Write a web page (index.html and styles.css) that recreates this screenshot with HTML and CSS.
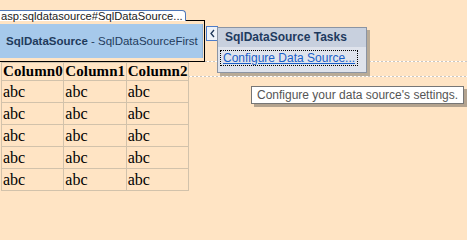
FILE: index.html
```html
<!DOCTYPE html>
<html lang="en">
<head>
    <meta charset="UTF-8">
    <title>SqlDataSource designer</title>
    <link rel="stylesheet" href="styles.css">
</head>
<body>
<div class="canvas">
    <div class="tag">asp:sqldatasource#SqlDataSource...</div>
    <div class="control">
        <div class="control-head"><b>SqlDataSource</b> - SqlDataSourceFirst</div>
    </div>
    <table class="grid">
        <tr><th>Column0</th><th>Column1</th><th>Column2</th></tr>
        <tr><td>abc</td><td>abc</td><td>abc</td></tr>
        <tr><td>abc</td><td>abc</td><td>abc</td></tr>
        <tr><td>abc</td><td>abc</td><td>abc</td></tr>
        <tr><td>abc</td><td>abc</td><td>abc</td></tr>
        <tr><td>abc</td><td>abc</td><td>abc</td></tr>
    </table>

    <!-- designer glyphs drawn over the page -->
    <div class="guide guide-top"></div>
    <div class="guide guide-bottom"></div>
    <div class="smart-btn">
        <svg width="7" height="9" viewBox="0 0 7 9"><path d="M5 1 L2 4.5 L5 8" fill="none" stroke="#1d3557" stroke-width="1.3"/></svg>
    </div>
    <div class="tasks">
        <div class="tasks-head">SqlDataSource Tasks</div>
        <div class="tasks-body">
            <a href="#" class="tasks-link">Configure Data Source...</a>
        </div>
    </div>
    <div class="tip">Configure your data source's settings.</div>
</div>
</body>
</html>
```

FILE: styles.css
```css
body {
    margin: 0;
    background: #ffe4c4;
    font-family: "Liberation Sans", Arial, sans-serif;
}
.canvas {
    position: relative;
    width: 467px;
    height: 240px;
    overflow: hidden;
}
.tag {
    display: inline-block;
    margin-top: 10px;
    height: 10px;
    line-height: 10px;
    padding: 0 2px 0 1px;
    font-size: 11.2px;
    color: #222;
    background: #fff;
    border: 1px solid #5078b8;
    border-bottom: none;
    border-left: none;
    border-radius: 0 4px 0 0;
    vertical-align: top;
}
.control {
    width: 204px;
    border: 1px solid #000;
    border-left: none;
    padding: 3px 0;
    margin-top: -1px;
}
.control-head {
    height: 34px;
    line-height: 34px;
    width: 203px;
    padding-left: 6px;
    box-sizing: border-box;
    background: #a6c9eb;
    border-right: 1px solid #8fb3da;
    font-size: 11.5px;
    color: #1f3b5c;
    white-space: nowrap;
}
.grid {
    border-collapse: collapse;
    table-layout: fixed;
    width: 188px;
    margin-left: 1px;
    font-family: "Liberation Serif", "Times New Roman", serif;
    font-size: 16px;
    color: #000;
    border-right: 1px solid #a8a29a;
    border-bottom: 1px solid #a8a29a;
}
.grid th, .grid td {
    border: 1px solid #d2c2ab;
    padding: 0 1px;
    text-align: left;
    white-space: nowrap;
}
.grid th {
    height: 17px;
    line-height: 17px;
    font-size: 15px;
    letter-spacing: 0.1px;
}
.grid td {
    height: 21px;
}
.guide {
    position: absolute;
    right: 0;
    height: 1px;
    background: repeating-linear-gradient(90deg, #c9c6c2 0 2px, #ffffff 2px 4px);
}
.guide-top {
    top: 61px;
    left: 205px;
}
.guide-bottom {
    top: 76px;
    left: 188px;
}
.smart-btn {
    position: absolute;
    left: 206px;
    top: 26px;
    width: 10px;
    height: 13px;
    background: #eef2f8;
    border: 1px solid #4d7cc9;
    display: flex;
    align-items: center;
    justify-content: center;
}
.tasks {
    position: absolute;
    left: 217px;
    top: 27px;
    width: 148px;
    border: 1px solid #8b94a3;
    box-shadow: 3px 3px 0 #b9ab97;
    font-size: 12px;
}
.tasks-head {
    height: 19px;
    line-height: 19px;
    padding-left: 7px;
    background: #c8d0de;
    color: #1e3a5f;
    font-weight: bold;
}
.tasks-body {
    background: #dfe3ec;
    padding: 4px 3px 7px 3px;
}
.tasks-link {
    display: inline-block;
    padding: 0 2px;
    line-height: 14px;
    color: #1a5fc8;
    outline: 1px dotted #000;
}
.tip {
    position: absolute;
    left: 251px;
    top: 86px;
    height: 16px;
    line-height: 16px;
    padding: 0 5px;
    background: #fff;
    border: 1px solid #767676;
    box-shadow: 3px 3px 0 #b3a38f;
    font-size: 12px;
    color: #555;
    white-space: nowrap;
}
```
